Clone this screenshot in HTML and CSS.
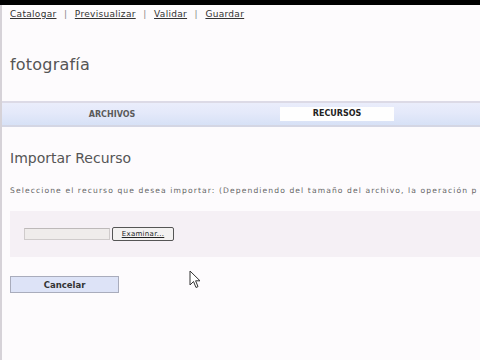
FILE: index.html
```html
<!DOCTYPE html>
<html lang="es">
<head>
<meta charset="utf-8">
<title>fotografía</title>
<link rel="stylesheet" href="styles.css">
</head>
<body>
<div class="topbar"></div>
<div class="page">
  <nav class="links">
    <a href="#">Catalogar</a><span class="sep">|</span><a href="#">Previsualizar</a><span class="sep">|</span><a href="#">Validar</a><span class="sep">|</span><a href="#">Guardar</a>
  </nav>
  <h1 class="title">fotografía</h1>
  <div class="tabs">
    <div class="tab">ARCHIVOS</div>
    <div class="tab active">RECURSOS</div>
    <div class="tab-rest"></div>
  </div>
  <h2 class="subtitle">Importar Recurso</h2>
  <p class="desc">Seleccione el recurso que desea importar: (Dependiendo del tamaño del archivo, la operación p</p>
  <div class="upload">
    <span class="file-input"></span><span class="browse">Examinar...</span>
  </div>
  <div class="actions">
    <span class="cancel">Cancelar</span>
  </div>
  <svg class="cursor" width="12" height="19" viewBox="0 0 12 19"><path d="M1 1 L1 15 L4.5 11.5 L7 17.5 L9 16.6 L6.6 10.8 L11 10.8 Z" fill="#fff" stroke="#333" stroke-width="1"/></svg>
</div>
</body>
</html>
```
FILE: styles.css
```css
html, body { margin: 0; padding: 0; }
body {
  width: 480px; height: 360px; overflow: hidden;
  background: #fdfbfd;
  font-family: "DejaVu Sans", Verdana, sans-serif;
}
.topbar { height: 5px; background: #000; }
.page {
  position: relative;
  border-left: 2px solid #d6d2d8;
  height: 355px;
  box-sizing: border-box;
  overflow: hidden;
}
.links {
  padding: 4px 0 0 8px;
  font-size: 9px;
  color: #777;
  line-height: 11px;
  letter-spacing: 0.3px;
}
.links a { color: #333; text-decoration: underline; }
.links .sep { margin: 0 7.5px; color: #888; }
.title {
  margin: 35px 0 0 8px;
  font-size: 16px;
  font-weight: normal;
  color: #555;
  line-height: 20px;
  letter-spacing: 0.2px;
}
.tabs {
  margin-top: 26px;
  display: flex;
  height: 22px;
  border-top: 2px solid #dcdae6;
  border-bottom: 2px solid #d4d6e4;
  background: linear-gradient(#eaedfb, #e4e9fa 45%, #d7e1f6);
  align-items: center;
}
.tab {
  font-size: 8px;
  font-weight: bold;
  color: #555;
  text-align: center;
}
.tab:first-child { width: 220px; margin-right: 58px; color: #5a5a5a; }
.tab.active {
  width: 114px; height: 14px; line-height: 14px;
  background: #fefefe; color: #222;
}
.tab-rest { flex: 1; }
.subtitle {
  margin: 22px 0 0 8px;
  font-size: 14px;
  font-weight: normal;
  color: #555;
  line-height: 18px;
}
.desc {
  margin: 19px 0 0 8px;
  font-size: 7.6px;
  color: #666;
  white-space: nowrap;
  overflow: hidden;
  letter-spacing: 1.1px;
  line-height: 10px;
}
.upload {
  margin: 15px 0 0 8px;
  background: #f5f0f5;
  height: 46px;
  display: flex;
  align-items: center;
  padding: 0 0 0 14px;
  gap: 2px;
}
.file-input {
  width: 86px; height: 12px;
  background: #efeceb;
  border: 1px solid #cfcbcb;
  border-top-color: #bdb9b9;
  box-sizing: border-box;
}
.browse {
  width: 62px; height: 14px;
  box-sizing: border-box;
  border: 1px solid #555;
  border-radius: 2px;
  background: #f3f1f1;
  font-size: 7px;
  color: #222;
  text-decoration: underline;
  text-align: center;
  line-height: 12px;
  letter-spacing: 0.3px;
}
.actions { margin: 19px 0 0 8px; }
.cancel {
  display: block;
  width: 109px; height: 17px;
  box-sizing: border-box;
  border: 1px solid #a9acbc;
  background: #dde3f7;
  font-size: 8.5px;
  font-weight: bold;
  color: #333;
  text-align: center;
  line-height: 17px;
}
.cursor { position: absolute; left: 187px; top: 265px; }
```
